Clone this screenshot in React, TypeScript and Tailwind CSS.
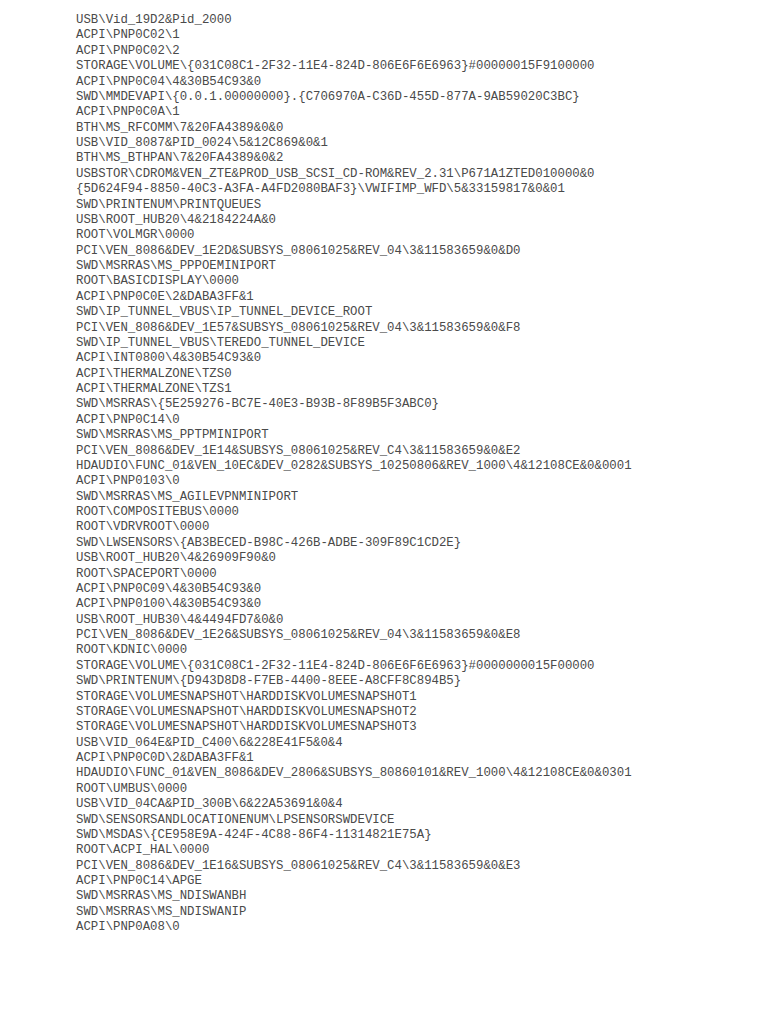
const lines = [
  "USB\\Vid_19D2&Pid_2000",
  "ACPI\\PNP0C02\\1",
  "ACPI\\PNP0C02\\2",
  "STORAGE\\VOLUME\\{031C08C1-2F32-11E4-824D-806E6F6E6963}#00000015F9100000",
  "ACPI\\PNP0C04\\4&30B54C93&0",
  "SWD\\MMDEVAPI\\{0.0.1.00000000}.{C706970A-C36D-455D-877A-9AB59020C3BC}",
  "ACPI\\PNP0C0A\\1",
  "BTH\\MS_RFCOMM\\7&20FA4389&0&0",
  "USB\\VID_8087&PID_0024\\5&12C869&0&1",
  "BTH\\MS_BTHPAN\\7&20FA4389&0&2",
  "USBSTOR\\CDROM&VEN_ZTE&PROD_USB_SCSI_CD-ROM&REV_2.31\\P671A1ZTED010000&0",
  "{5D624F94-8850-40C3-A3FA-A4FD2080BAF3}\\VWIFIMP_WFD\\5&33159817&0&01",
  "SWD\\PRINTENUM\\PRINTQUEUES",
  "USB\\ROOT_HUB20\\4&2184224A&0",
  "ROOT\\VOLMGR\\0000",
  "PCI\\VEN_8086&DEV_1E2D&SUBSYS_08061025&REV_04\\3&11583659&0&D0",
  "SWD\\MSRRAS\\MS_PPPOEMINIPORT",
  "ROOT\\BASICDISPLAY\\0000",
  "ACPI\\PNP0C0E\\2&DABA3FF&1",
  "SWD\\IP_TUNNEL_VBUS\\IP_TUNNEL_DEVICE_ROOT",
  "PCI\\VEN_8086&DEV_1E57&SUBSYS_08061025&REV_04\\3&11583659&0&F8",
  "SWD\\IP_TUNNEL_VBUS\\TEREDO_TUNNEL_DEVICE",
  "ACPI\\INT0800\\4&30B54C93&0",
  "ACPI\\THERMALZONE\\TZS0",
  "ACPI\\THERMALZONE\\TZS1",
  "SWD\\MSRRAS\\{5E259276-BC7E-40E3-B93B-8F89B5F3ABC0}",
  "ACPI\\PNP0C14\\0",
  "SWD\\MSRRAS\\MS_PPTPMINIPORT",
  "PCI\\VEN_8086&DEV_1E14&SUBSYS_08061025&REV_C4\\3&11583659&0&E2",
  "HDAUDIO\\FUNC_01&VEN_10EC&DEV_0282&SUBSYS_10250806&REV_1000\\4&12108CE&0&0001",
  "ACPI\\PNP0103\\0",
  "SWD\\MSRRAS\\MS_AGILEVPNMINIPORT",
  "ROOT\\COMPOSITEBUS\\0000",
  "ROOT\\VDRVROOT\\0000",
  "SWD\\LWSENSORS\\{AB3BECED-B98C-426B-ADBE-309F89C1CD2E}",
  "USB\\ROOT_HUB20\\4&26909F90&0",
  "ROOT\\SPACEPORT\\0000",
  "ACPI\\PNP0C09\\4&30B54C93&0",
  "ACPI\\PNP0100\\4&30B54C93&0",
  "USB\\ROOT_HUB30\\4&4494FD7&0&0",
  "PCI\\VEN_8086&DEV_1E26&SUBSYS_08061025&REV_04\\3&11583659&0&E8",
  "ROOT\\KDNIC\\0000",
  "STORAGE\\VOLUME\\{031C08C1-2F32-11E4-824D-806E6F6E6963}#0000000015F00000",
  "SWD\\PRINTENUM\\{D943D8D8-F7EB-4400-8EEE-A8CFF8C894B5}",
  "STORAGE\\VOLUMESNAPSHOT\\HARDDISKVOLUMESNAPSHOT1",
  "STORAGE\\VOLUMESNAPSHOT\\HARDDISKVOLUMESNAPSHOT2",
  "STORAGE\\VOLUMESNAPSHOT\\HARDDISKVOLUMESNAPSHOT3",
  "USB\\VID_064E&PID_C400\\6&228E41F5&0&4",
  "ACPI\\PNP0C0D\\2&DABA3FF&1",
  "HDAUDIO\\FUNC_01&VEN_8086&DEV_2806&SUBSYS_80860101&REV_1000\\4&12108CE&0&0301",
  "ROOT\\UMBUS\\0000",
  "USB\\VID_04CA&PID_300B\\6&22A53691&0&4",
  "SWD\\SENSORSANDLOCATIONENUM\\LPSENSORSWDEVICE",
  "SWD\\MSDAS\\{CE958E9A-424F-4C88-86F4-11314821E75A}",
  "ROOT\\ACPI_HAL\\0000",
  "PCI\\VEN_8086&DEV_1E16&SUBSYS_08061025&REV_C4\\3&11583659&0&E3",
  "ACPI\\PNP0C14\\APGE",
  "SWD\\MSRRAS\\MS_NDISWANBH",
  "SWD\\MSRRAS\\MS_NDISWANIP",
  "ACPI\\PNP0A08\\0",
];

export default function App() {
  return (
    <div className="min-h-[1024px] w-[768px] bg-white pl-[76px] pt-[13px]">
      <div className="font-['Liberation_Mono','Courier_New',monospace] text-[12.35px] leading-[15.37px] text-[#4a4a4a] whitespace-pre">
        {lines.map((line, i) => (
          <div key={i}>{line}</div>
        ))}
      </div>
    </div>
  );
}
